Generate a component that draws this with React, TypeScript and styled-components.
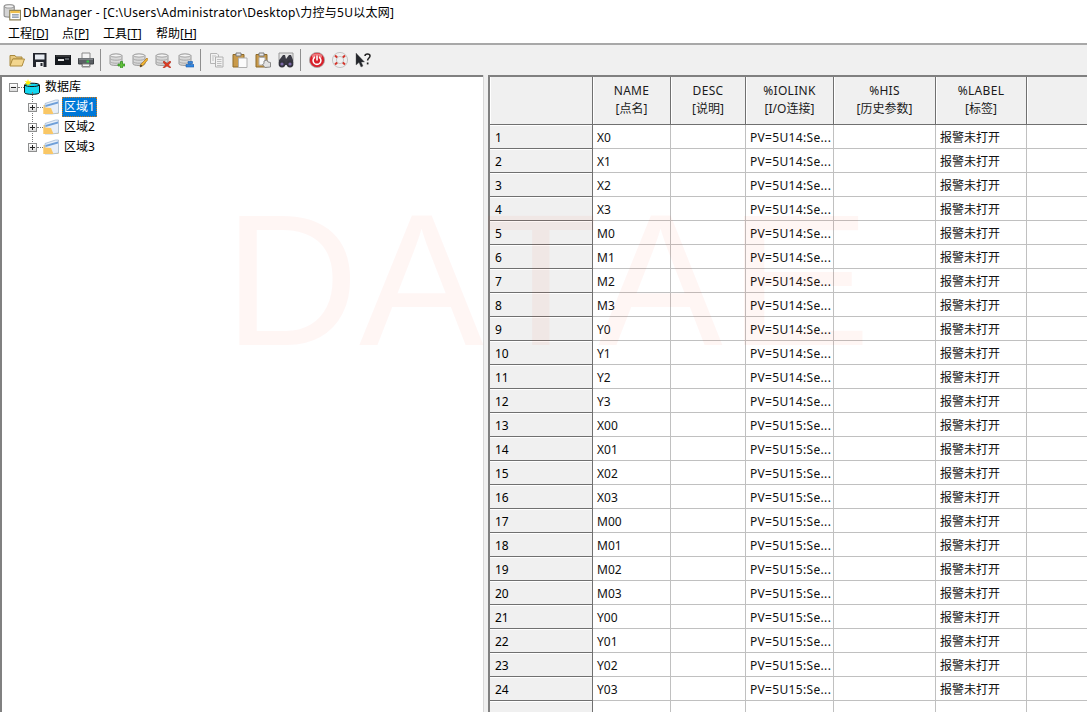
import React from "react";
import styled, { createGlobalStyle } from "styled-components";

const GlobalStyle = createGlobalStyle`
  html, body {
    margin: 0;
    padding: 0;
    height: 100%;
    background: #fff;
  }
  #root {
    height: 100%;
  }
`;

const FONT = `"Noto Sans", "Noto Sans CJK SC", sans-serif`;

const Window = styled.div`
  position: relative;
  width: 1087px;
  height: 712px;
  overflow: hidden;
  display: flex;
  flex-direction: column;
  background: #f0f0f0;
  font-family: ${FONT};
  font-size: 12px;
  color: #000;
`;

const TitleBar = styled.div`
  height: 22px;
  flex: none;
  box-sizing: border-box;
  padding: 1px 0 0 3px;
  display: flex;
  align-items: center;
  gap: 2px;
  background: #fff;
  font-size: 12px;
  letter-spacing: 0.25px;
  white-space: nowrap;
`;

const MenuBar = styled.div`
  height: 20px;
  flex: none;
  box-sizing: content-box;
  display: flex;
  align-items: center;
  padding: 1px 0 0 8px;
  margin-bottom: -1px;
  background: #fff;
  border-bottom: 2px solid #a8a8a8;
`;

const MenuItem = styled.span<{ $width: number }>`
  width: ${(p) => p.$width}px;
  white-space: nowrap;
  u {
    text-underline-offset: 1px;
  }
`;

const ToolBar = styled.div`
  height: 31px;
  flex: none;
  display: flex;
  align-items: center;
  gap: 7px;
  padding-left: 9px;
`;

const ToolIcon = styled.svg`
  width: 16px;
  height: 16px;
  flex: none;
  display: block;
`;

const ToolSep = styled.div`
  width: 1px;
  height: 22px;
  margin: 0 1px 0 -1px;
  background: #8f8f8f;
`;

const Split = styled.div`
  flex: 1;
  min-height: 0;
  display: flex;
`;

const TreePane = styled.div`
  width: 483px;
  flex: none;
  box-sizing: border-box;
  background: #fff;
  border-top: 2px solid #808080;
  border-left: 2px solid #808080;
  padding: 0 0 0 7px;
`;

const Splitter = styled.div`
  width: 5px;
  flex: none;
  background: #f0f0f0;
  border-left: 1px solid #d8d8d8;
  box-sizing: border-box;
`;

const TreeRow = styled.div`
  height: 20px;
  display: flex;
  align-items: center;
`;

const Expander = styled.span`
  width: 9px;
  height: 9px;
  flex: none;
  box-sizing: border-box;
  border: 1px solid #8e8f8f;
  background: linear-gradient(#fff, #dcdcdc);
  position: relative;
  &::before {
    content: "";
    position: absolute;
    left: 1px;
    right: 1px;
    top: 3px;
    height: 1px;
    background: #222;
  }
`;

const ExpanderPlus = styled(Expander)`
  &::after {
    content: "";
    position: absolute;
    top: 1px;
    bottom: 1px;
    left: 3px;
    width: 1px;
    background: #222;
  }
`;

const Dots = styled.span`
  width: 6px;
  flex: none;
  border-top: 1px dotted #777;
`;

const ChildList = styled.div`
  position: relative;
  padding-left: 19px;
  &::before {
    content: "";
    position: absolute;
    left: 23px;
    top: -5px;
    height: 50px;
    border-left: 1px dotted #777;
  }
`;

const NodeLabel = styled.span<{ $selected?: boolean }>`
  margin-left: 3px;
  padding: 0 1px;
  height: 20px;
  line-height: 18px;
  box-sizing: border-box;
  border: 1px dotted ${(p) => (p.$selected ? "#c87a20" : "transparent")};
  background: ${(p) => (p.$selected ? "#0078d7" : "transparent")};
  color: ${(p) => (p.$selected ? "#fff" : "#000")};
`;

const GridPane = styled.div`
  flex: 1;
  min-width: 0;
  box-sizing: border-box;
  background: #fff;
  border-top: 2px solid #808080;
  border-left: 2px solid #808080;
  display: grid;
  grid-template-columns: 103px 78px 75px 88px 102px 91px 1fr;
  grid-auto-rows: 24px;
  grid-template-rows: 48px;
  align-content: start;
`;

const HeadCell = styled.div`
  box-sizing: border-box;
  background: #f0f0f0;
  border-right: 1px solid #707070;
  border-bottom: 1px solid #707070;
  box-shadow: inset 1px 0 0 #fff;
  display: flex;
  flex-direction: column;
  align-items: center;
  justify-content: center;
  line-height: 18px;
  padding-bottom: 1px;
  color: #1a1a1a;
  &:nth-child(7n) {
    border-right: none;
  }
`;

const HeadCode = styled.span`
  letter-spacing: 0.3px;
`;

const RowHead = styled.div`
  box-sizing: border-box;
  background: #f0f0f0;
  border-right: 1px solid #707070;
  border-bottom: 1px solid #707070;
  box-shadow: inset 0 1px 0 #fff;
  padding-left: 5px;
  line-height: 25px;
`;

const Cell = styled.div<{ $spaced?: boolean }>`
  box-sizing: border-box;
  background: #fff;
  border-right: 1px solid #c0c0c0;
  border-bottom: 1px solid #c0c0c0;
  padding-left: 4px;
  line-height: 25px;
  white-space: nowrap;
  overflow: hidden;
  color: #111;
  letter-spacing: ${(p) => (p.$spaced ? "0.33px" : "normal")};
  &:nth-child(7n) {
    border-right: none;
  }
`;

const Watermark = styled.div`
  position: absolute;
  left: 224px;
  top: 173px;
  font-family: "Liberation Sans", sans-serif;
  font-size: 187px;
  line-height: 215px;
  font-kerning: none;
  color: rgba(255, 40, 0, 0.045);
  pointer-events: none;
  white-space: nowrap;
`;

const WatermarkEnd = styled.span`
  display: inline-block;
  margin-left: 3px;
  transform: scaleX(1.17);
  transform-origin: left center;
`;

// database cylinder shared by the four point buttons
const DbBase = () => (
  <>
    <path d="M1 3.5C1 1.8 13 1.8 13 3.5V12C13 13.9 1 13.9 1 12Z" fill="#d9d9d9" stroke="#9a9a9a" />
    <ellipse cx="7" cy="3.5" rx="5.5" ry="1.6" fill="#f4f4f4" stroke="#a5a5a5" />
    <path d="M1.5 7C3 8.6 11 8.6 12.5 7M1.5 10C3 11.6 11 11.6 12.5 10" fill="none" stroke="#a8a8a8" />
  </>
);

const icons: Record<string, React.ReactNode> = {
  open: (
    <>
      <path d="M1 3.5H6L7 5H13V7H4L1.5 13.5H1Z" fill="#e8c980" stroke="#a98a3f" />
      <path d="M3.6 7H15.5L13 14H1Z" fill="#f3d68e" stroke="#ad8c3e" />
    </>
  ),
  save: (
    <>
      <path d="M1 1H14.5V15H1Z" fill="#23262d" />
      <path d="M3 2.5H12.5V7.5H3Z" fill="#e8ecf2" />
      <path d="M4 10H11.5V15H4Z" fill="#f2f2f2" />
      <path d="M8.5 11H10.5V14H8.5Z" fill="#23262d" />
    </>
  ),
  device: (
    <>
      <path d="M0 3H16V13H0Z" fill="#15181d" />
      <path d="M1 4H15" stroke="#555" />
      <path d="M3 8H9" stroke="#e4e4e4" strokeWidth="2" />
      <path d="M10 7H14" stroke="#9aa0a8" />
    </>
  ),
  print: (
    <>
      <path d="M4 1H12V7H4ZM4 11H12V15H4Z" fill="#f4f4f4" stroke="#8a8a8a" />
      <path d="M0.5 6.5H15.5V12H0.5Z" fill="#5a5e63" stroke="#3f4246" />
      <path d="M1 7H15" stroke="#a5a8ac" />
      <path d="M8.5 8.5H11V10.5H8.5Z" fill="#35d04a" />
      <path d="M4.5 12H11.5V14.5H4.5Z" fill="#f4f4f4" stroke="#8a8a8a" />
    </>
  ),
  dbAdd: (
    <>
      <DbBase />
      <path d="M9 12H11.5V9.5H13.5V12H16V14H13.5V16.5H11.5V14H9Z" fill="#62c23a" stroke="#2f8a22" strokeWidth="0.7" />
    </>
  ),
  dbEdit: (
    <>
      <DbBase />
      <path d="M15 6L16 7.5L10.5 14L8 15L8.7 12.4Z" fill="#f2b632" stroke="#a8701c" strokeWidth="0.7" />
      <path d="M8 15L8.7 12.4L10.5 14Z" fill="#333" />
    </>
  ),
  dbDelete: (
    <>
      <DbBase />
      <path d="M9 9L12 11.5L15 9L16 10L13.5 13L16 15.5L15 16L12 14L9 16L8 15.5L10.5 13L8 10Z" fill="#e23a1e" stroke="#9c1f10" strokeWidth="0.5" />
    </>
  ),
  dbList: (
    <>
      <DbBase />
      <path d="M10 9.5H14.5V11.5H10ZM8 12.5H16V15H8Z" fill="#2f86e0" stroke="#1c5cab" strokeWidth="0.6" />
    </>
  ),
  copy: (
    <>
      <path d="M1.5 1.5H8L9.5 3V11.5H1.5Z" fill="#f2f2f2" stroke="#b5b5b5" />
      <path d="M6.5 5H14V15H6.5Z" fill="#f2f2f2" stroke="#b0b0b0" />
      <path d="M3 4H7M3 6H5M3 8H5M8 7.5H12.5M8 9.5H12.5M8 11.5H12.5M8 13.5H12.5" stroke="#c0c0c0" />
    </>
  ),
  paste: (
    <>
      <path d="M1 2.5H12V15H1Z" fill="#c99a4a" stroke="#8d6a2a" />
      <path d="M4 1H9V4H4Z" fill="#e8e8e8" stroke="#7a7a7a" />
      <path d="M6.5 6H15V15.5H6.5Z" fill="#fbfbfb" stroke="#b0b0b0" />
    </>
  ),
  pasteLink: (
    <>
      <path d="M1 2.5H12V15H1Z" fill="#c99a4a" stroke="#8d6a2a" />
      <path d="M4 1H9V4H4Z" fill="#e8e8e8" stroke="#7a7a7a" />
      <path d="M4 5.5H10V13H4Z" fill="#fbfbfb" stroke="#b0b0b0" />
      <path d="M9 9L12 8L13 10L15.5 10.5V15L10 15.5L7.5 12.5L9 11.5Z" fill="#e2e2e2" stroke="#8a8a8a" />
    </>
  ),
  find: (
    <>
      <path d="M1 1H15V11H1Z" fill="#e4e4e4" stroke="#9a9a9a" />
      <path d="M2 7L5 3H7L8 7L11 3H13L15 8V13H1V8Z" fill="#3a3a44" />
      <circle cx="4" cy="12" r="3.4" fill="#33333d" />
      <circle cx="12" cy="12" r="3.4" fill="#33333d" />
      <circle cx="4" cy="12" r="1.6" fill="#7c6aa8" />
      <circle cx="12" cy="12" r="1.6" fill="#7c6aa8" />
    </>
  ),
  power: (
    <>
      <circle cx="8" cy="8" r="7.6" fill="#d8202a" stroke="#a8a8a8" strokeWidth="0.8" />
      <ellipse cx="8" cy="4.2" rx="5" ry="2.6" fill="#f07c80" />
      <circle cx="8" cy="8.5" r="3.9" fill="none" stroke="#fff" strokeWidth="1.6" />
      <path d="M8 3.5V8.5" stroke="#d8202a" strokeWidth="3.6" />
      <path d="M8 3.5V8.5" stroke="#fff" strokeWidth="1.6" />
    </>
  ),
  help: (
    <>
      <circle cx="8" cy="8" r="5.8" fill="none" stroke="#eeeeee" strokeWidth="4" />
      <circle cx="8" cy="8" r="7.6" fill="none" stroke="#a8a8a8" strokeWidth="0.6" />
      <circle cx="8" cy="8" r="3.6" fill="none" stroke="#a8a8a8" strokeWidth="0.6" />
      <path d="M3 3.5L5.2 5.5M13 3.5L10.8 5.5M3 12.5L5.2 10.5M13 12.5L10.8 10.5" stroke="#d4362c" strokeWidth="2" />
    </>
  ),
  whatsThis: (
    <>
      <path d="M1 1V13L4 10.5L6 15L8 14L6.2 10H9.5Z" fill="#23262b" stroke="#555" strokeWidth="0.4" />
      <path d="M10 4C10 1.4 15 1.4 15 4C15 6 12.6 6 12.6 8.6" fill="none" stroke="#222" strokeWidth="1.5" />
      <path d="M11.8 10.5H13.5V12.4H11.8Z" fill="#222" />
    </>
  ),
};

const ToolGlyph = ({ name }: { name: string }) => (
  <ToolIcon viewBox="0 0 16 16">{icons[name]}</ToolIcon>
);

const AppIconBox = styled(ToolIcon)`
  width: 18px;
  height: 18px;
`;

const AppIcon = () => (
  <AppIconBox viewBox="0 0 16 16">
    <path d="M1 3C1 1 10 1 10 3V11C10 13 1 13 1 11Z" fill="#d4d4d4" stroke="#8e8e8e" />
    <ellipse cx="5.5" cy="3" rx="4.2" ry="1.4" fill="#f2f2f2" stroke="#999" />
    <path d="M6 6.5H15.5V15H6Z" fill="#fff" stroke="#8a7f55" />
    <path d="M6.5 7H15V9H6.5Z" fill="#efc04d" />
    <path d="M8 10.5H14M8 12.5H14" stroke="#7a8aa0" />
  </AppIconBox>
);

const RootIcon = () => (
  <ToolIcon viewBox="0 0 16 16">
    <path d="M0.5 6C0.5 3.6 15.5 3.6 15.5 6V13.5C15.5 16 0.5 16 0.5 13.5Z" fill="#14d6ef" stroke="#111" />
    <path d="M1 6.2C2.5 8 13.5 8 15 6.2" fill="none" stroke="#111" />
    <path d="M4 0L4.8 2.6L7.4 1.8L5.6 3.8L7.4 5.8L4.8 5L4 7.5L3.2 5L0.6 5.8L2.4 3.8L0.6 1.8L3.2 2.6Z" fill="#ffee00" />
  </ToolIcon>
);

const AreaIcon = () => (
  <ToolIcon viewBox="0 0 16 16">
    <path d="M0.5 6H15.5V15H0.5Z" fill="#f7cf78" />
    <path d="M2 4.5L12.5 1H15.5V14L9 15H2Z" fill="#e6eef8" stroke="#9bb3d0" strokeWidth="0.7" />
    <path d="M2.5 6L15 2.5V4.5L2.5 8Z" fill="#6f9fd8" />
    <path d="M0.5 8.5L8 9L10.5 15H0.5Z" fill="#f9c766" />
  </ToolIcon>
);

const toolGroups = [
  ["open", "save", "device", "print"],
  ["dbAdd", "dbEdit", "dbDelete", "dbList"],
  ["copy", "paste", "pasteLink", "find"],
  ["power", "help", "whatsThis"],
];

const columns = [
  ["NAME", "[点名]"],
  ["DESC", "[说明]"],
  ["%IOLINK", "[I/O连接]"],
  ["%HIS", "[历史参数]"],
  ["%LABEL", "[标签]"],
];

const names = [
  "X0", "X1", "X2", "X3", "M0", "M1", "M2", "M3", "Y0", "Y1", "Y2", "Y3",
  "X00", "X01", "X02", "X03", "M00", "M01", "M02", "M03", "Y00", "Y01", "Y02", "Y03",
];

export default function App() {
  return (
    <Window>
      <GlobalStyle />
      <TitleBar>
        <AppIcon />
        DbManager - [C:\Users\Administrator\Desktop\力控与5U以太网]
      </TitleBar>
      <MenuBar>
        <MenuItem $width={54}>工程[<u>D</u>]</MenuItem>
        <MenuItem $width={41}>点[<u>P</u>]</MenuItem>
        <MenuItem $width={53}>工具[<u>T</u>]</MenuItem>
        <MenuItem $width={60}>帮助[<u>H</u>]</MenuItem>
      </MenuBar>
      <ToolBar>
        {toolGroups.map((group, i) => (
          <React.Fragment key={i}>
            {i > 0 && <ToolSep />}
            {group.map((name) => (
              <ToolGlyph key={name} name={name} />
            ))}
          </React.Fragment>
        ))}
      </ToolBar>
      <Split>
        <TreePane>
          <TreeRow>
            <Expander />
            <Dots />
            <RootIcon />
            <NodeLabel>数据库</NodeLabel>
          </TreeRow>
          <ChildList>
            {["区域1", "区域2", "区域3"].map((label, i) => (
              <TreeRow key={label}>
                <ExpanderPlus />
                <Dots />
                <AreaIcon />
                <NodeLabel $selected={i === 0}>{label}</NodeLabel>
              </TreeRow>
            ))}
          </ChildList>
        </TreePane>
        <Splitter />
        <GridPane>
          <HeadCell />
          {columns.map(([code, label]) => (
            <HeadCell key={code}>
              <HeadCode>{code}</HeadCode>
              <span>{label}</span>
            </HeadCell>
          ))}
          <HeadCell />
          {names.map((name, i) => (
            <React.Fragment key={name}>
              <RowHead>{i + 1}</RowHead>
              <Cell>{name}</Cell>
              <Cell />
              <Cell $spaced>{`PV=${i < 12 ? "5U14" : "5U15"}:Se...`}</Cell>
              <Cell />
              <Cell>报警未打开</Cell>
              <Cell />
            </React.Fragment>
          ))}
          <RowHead />
          <Cell />
          <Cell />
          <Cell />
          <Cell />
          <Cell />
          <Cell />
        </GridPane>
      </Split>
      <Watermark>
        DATA<WatermarkEnd>E</WatermarkEnd>
      </Watermark>
    </Window>
  );
}
